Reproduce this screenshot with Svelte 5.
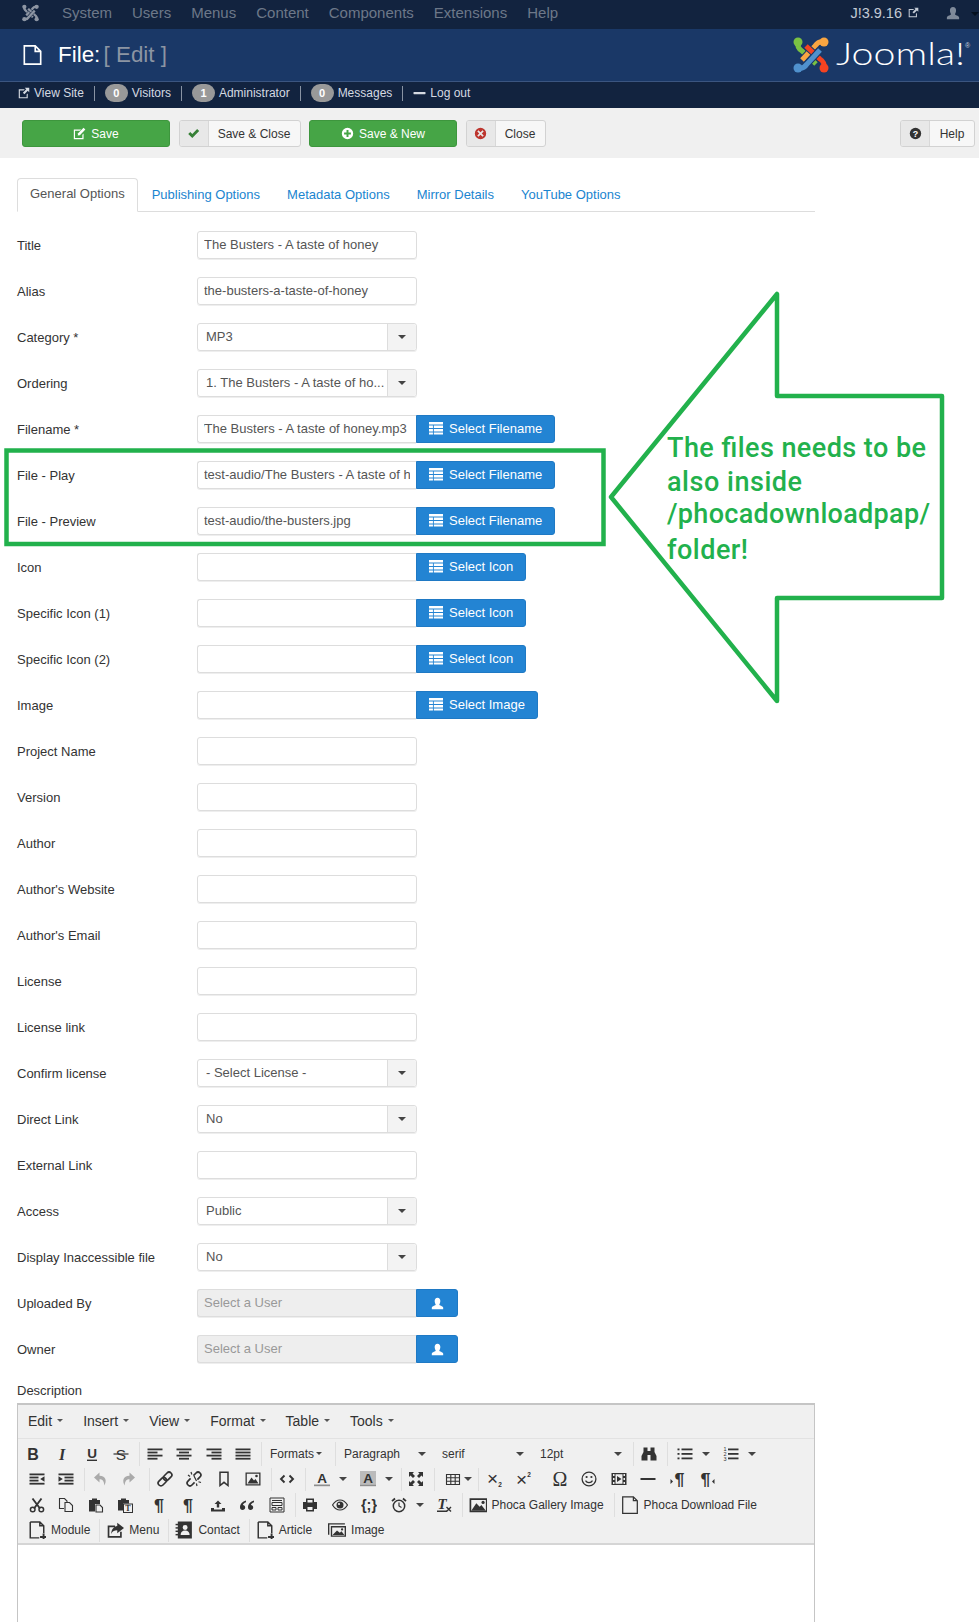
<script>
  const bars = (a) => a.map(([x, y, w, h = 1.8]) => `<rect x="${x}" y="${y}" width="${w}" height="${h}"/>`).join('');
  const txt = (s, size, x, y, o = '') =>
    `<text x="${x}" y="${y}" font-size="${size}" font-family="Liberation Sans" text-anchor="middle" ${o}>${s}</text>`;
  const line = (d, w = 1.4) => `<path d="${d}" fill="none" stroke="currentColor" stroke-width="${w}"/>`;
  const ys = [2.5, 5.6, 8.7, 11.8];

  const icons = {
    bold: txt('B', 16, 8, 14, 'font-weight="700"'),
    italic: `<text x="8" y="14" font-size="16" font-family="Liberation Serif" font-weight="700" font-style="italic" text-anchor="middle">I</text>`,
    underline: txt('U', 13.5, 8, 11.5, 'font-weight="700"') + bars([[3, 13.6, 10, 1.4]]),
    strike: txt('S', 15.5, 8, 13.5) + bars([[0.5, 7.4, 15, 1.2]]),
    alignleft: bars([[0.5, ys[0], 15], [0.5, ys[1], 10], [0.5, ys[2], 15], [0.5, ys[3], 10]]),
    aligncenter: bars([[0.5, ys[0], 15], [3, ys[1], 10], [0.5, ys[2], 15], [3, ys[3], 10]]),
    alignright: bars([[0.5, ys[0], 15], [5.5, ys[1], 10], [0.5, ys[2], 15], [5.5, ys[3], 10]]),
    justify: bars([[0.5, ys[0], 15], [0.5, ys[1], 15], [0.5, ys[2], 15], [0.5, ys[3], 15]]),
    outdent: bars([[0.5, ys[0], 15], [0.5, ys[1], 9], [0.5, ys[2], 9], [0.5, ys[3], 15]]) + '<path d="M15.5 5.2v5.6L11.2 8z"/>',
    indent: bars([[0.5, ys[0], 15], [6.5, ys[1], 9], [6.5, ys[2], 9], [0.5, ys[3], 15]]) + '<path d="M0.5 5.2v5.6L4.8 8z"/>',
    undo: '<path d="M7.5 1.5 2 6.5l5.5 5V8.3c2.8 0 4.6 1.4 4.8 6.2 2.6-4.6 1.8-9.4-4.8-9.8z"/>',
    redo: '<path d="M8.5 1.5l5.5 5-5.5 5V8.3c-2.8 0-4.6 1.4-4.8 6.2-2.6-4.6-1.8-9.4 4.8-9.8z"/>',
    link: '<g fill="none" stroke="currentColor" stroke-width="1.7" transform="rotate(-45 8 8)"><rect x="-0.5" y="5.2" width="9.5" height="5.6" rx="2.8"/><rect x="7" y="5.2" width="9.5" height="5.6" rx="2.8"/></g>',
    unlink: '<g fill="none" stroke="currentColor" stroke-width="1.7" transform="rotate(-45 8 8)"><path d="M6 5.2H2.300a2.800 2.800 0 0 0 0 5.600H6"/><path d="M10 5.200h3.700a2.800 2.800 0 0 1 0 5.600H10"/></g>' + line('M2 4 4 5.5M5 1l.8 2.500M11 15l-.6-2.500M15 11.500l-2.500-.8M8 5l2.500 5', 1.2),
    bookmark: line('M4 1.200h8v13.300l-4-3.200-4 3.200z', 1.5),
    image: '<path fill-rule="evenodd" d="M0.500 1.500h15v13h-15zM1.800 2.800v10.400h12.400V2.800z"/><path d="M2.500 12.500 6.500 6.500l2.500 3 1.500-1.500 3 4.500z"/><circle cx="11.500" cy="5" r="1.300"/>',
    code: line('M5.500 4.500 2 8l3.500 3.500M10.500 4.500 14 8l-3.500 3.500', 1.9),
    forecolor: txt('A', 13.5, 8, 11.5, 'font-weight="700"') + '<rect x="0" y="13.500" width="16" height="1.700" fill="#8e8e8e"/>',
    backcolor: '<rect x="0" y="-1" width="16" height="14.500" fill="#bbb"/>' + txt('A', 13.5, 8, 11.5, 'font-weight="700"') + '<rect x="0" y="13.500" width="16" height="1.700" fill="#8e8e8e"/>',
    fullscreen: '<path d="M1 1h5L4.500 2.500 7 5 5 7 2.500 4.500 1 6zM15 1v5l-1.500-1.500L11 7 9 5l2.500-2.500L10 1zM15 15h-5l1.500-1.500L9 11l2-2 2.500 2.500L15 10zM1 15v-5l1.500 1.500L5 9l2 2-2.500 2.500L6 15z"/>',
    table: line('M1.500 3.500h13v10h-13zM1.500 6.800h13M1.500 10.200h13M5.800 3.500v10M10.200 3.500v10', 1.1),
    sub: txt('×', 19, 6.5, 13.5) + txt('2', 6.5, 14, 15.5, 'font-weight="700"'),
    sup: txt('×', 19, 6.5, 14.5) + txt('2', 6.5, 14, 5.5, 'font-weight="700"'),
    omega: `<text x="8" y="15" font-size="20" font-family="Liberation Serif" text-anchor="middle">Ω</text>`,
    smile: '<circle cx="8" cy="8" r="6.900" fill="none" stroke="currentColor" stroke-width="1.300"/><circle cx="5.600" cy="6" r="1.100"/><circle cx="10.400" cy="6" r="1.100"/>' + line('M4.500 9.600c1.500 2.700 5.500 2.700 7 0', 1.2),
    media: '<path fill-rule="evenodd" d="M0.500 2h15v12h-15zM2 3v2h1.500V3zM2 7v2h1.500V7zM2 11v2h1.500v-2zM12.500 3v2H14V3zM12.500 7v2H14V7zM12.500 11v2H14v-2zM4.500 3.200v9.600h7V3.200z"/><path d="M6 5l4.500 3L6 11z"/>',
    hr: '<rect x="0.500" y="7" width="15" height="2"/>',
    ltr: txt('¶', 18, 9.500, 14.500, 'font-weight="700"') + '<path d="M0.500 8v5l2.500-2.500z"/>',
    rtl: txt('¶', 18, 6.500, 14.500, 'font-weight="700"') + '<path d="M15.500 8v5L13 10.500z"/>',
    cut: line('M3.500 1.500 11 11.500M12.500 1.500 5 11.500', 1.9) + '<circle cx="3.700" cy="12.500" r="2.300" fill="none" stroke="currentColor" stroke-width="1.500"/><circle cx="12.300" cy="12.500" r="2.300" fill="none" stroke="currentColor" stroke-width="1.500"/>',
    copy: line('M6 11.500H1.500v-10h5l2.500 2.500v2M7 5.500h4.500l3 3v6H7z', 1.1),
    paste: '<path d="M1 3h3V1.500h5V3h3v4H7v7.500H1z"/><path d="M8 8h4l2.500 2.500v4.500H8z" fill="#f0f0f0" stroke="currentColor" stroke-width="1.100"/>',
    pastetext: '<path d="M1 3h3V1.500h5V3h3v3.500H6v7H1z"/><rect x="6.500" y="7" width="9" height="8.500" fill="#f0f0f0" stroke="currentColor" stroke-width="1"/>' + `<text x="11" y="14" font-size="8" font-weight="700" font-family="Liberation Serif" text-anchor="middle">T</text>`,
    para: txt('¶', 18, 8, 14.500, 'font-weight="700"'),
    upload: '<path d="M8 3.500 11.500 7H9.200v3.500H6.800V7H4.500zM1 11h3v1.500h8V11h3v3.500H1z"/>',
    quote: '<path d="M7 3.500C3.500 4.500 1 7 1 10.300c0 1.700 1 2.700 2.500 2.700s2.700-1 2.700-2.500-1-2.400-2.300-2.500C4 7 5.300 5.800 7 5.200zM15 3.500c-3.500 1-6 3.500-6 6.800 0 1.700 1 2.700 2.500 2.700s2.700-1 2.700-2.500-1-2.400-2.300-2.500c.1-1 1.400-2.200 3.100-2.800z"/>',
    template: line('M1 1h14v14H1zM3 3.500h10M3 5.500h10v3H3zM3 10.500h4v2.500H3zM9 10.500h4v2.500H9z', 1),
    print: '<path fill-rule="evenodd" d="M4 1.500h8V5h3v7h-3v2.500H4V12H1V5h3zM5.500 3v2.500h5V3zM5.500 10v3h5v-3z"/>',
    eye: '<path fill="none" stroke="currentColor" stroke-width="1.200" d="M0.500 8C3 4 5.500 3 8 3s5 1 7.500 5C13 12 10.500 13 8 13s-5-1-7.500-5z"/><circle cx="8" cy="8" r="3.500"/><circle cx="7" cy="7" r="1.100" fill="#f0f0f0"/>',
    codesample: txt('{;}', 14.5, 8, 13, 'font-weight="700"'),
    clock: '<circle cx="8" cy="9" r="5.700" fill="none" stroke="currentColor" stroke-width="1.500"/>' + line('M8 5.500V9l2.500 1.500', 1.2) + line('M1 4.200 4 1.500M15 4.200 12 1.500', 1.8),
    clear: `<text x="6" y="12" font-size="15" font-weight="700" font-style="italic" font-family="Liberation Serif" text-anchor="middle">T</text>` + bars([[1, 13.5, 10, 1.5]]) + line('M10.500 10l4.500 4.500M15 10l-4.500 4.500', 1.4),
    binoc: '<path d="M2.500 1.500h4v3.500h3V1.500h4v4.500l2 4v4.500h-6V9h-3v5.500h-6V10l2-4z"/>',
    bullist: bars([[0.5, 2.5, 2, 1.800], [0.5, 7, 2, 1.800], [0.5, 11.500, 2, 1.800], [4.500, 2.500, 11, 1.800], [4.500, 7, 11, 1.800], [4.500, 11.500, 11, 1.800]]),
    numlist: bars([[5, 2.500, 10.500, 1.800], [5, 7, 10.500, 1.800], [5, 11.500, 10.500, 1.800]]) + txt('1', 5.500, 2, 5) + txt('2', 5.500, 2, 10) + txt('3', 5.500, 2, 15),
    newdoc: line('M2 .8h8.500l3.500 3.500v6.500M10 15H2V.8M10.500 .8v3.500H14', 1.300) + '<path d="M13 11h1.700v2.300H17V15h-2.300v2.300H13V15h-2.300v-1.700H13z"/>',
    menu: '<path d="M1.500 4H8v1.600H3v7.800h9.500V9.500h1.500v5.400H1.500z"/><path d="M10 1.500l6 4.700-6 4.700V8.300C7.500 8.300 5.800 9 4.700 11.500 4.700 7.500 7 5 10 4.500z"/>',
    contact: '<path fill-rule="evenodd" d="M2.500 .5H15v15H2.500zM9 3.500a2.200 2.200 0 1 0 0 4.400 2.200 2.200 0 0 0 0-4.400zM5 12.500h8c0-2.500-1.500-4-4-4s-4 1.500-4 4z"/><rect x="0.500" y="2.500" width="3" height="1.300"/><rect x="0.500" y="5.500" width="3" height="1.300"/><rect x="0.500" y="8.500" width="3" height="1.300"/><rect x="0.500" y="11.500" width="3" height="1.300"/>',
    image2: '<path fill-rule="evenodd" d="M0 2h15v1.200H1.200v9H0zM2.500 4.500H16V14H2.500zM3.700 5.700v7.100h11.100V5.700z"/><path d="M4 12.500l4-4 2.500 2 1.500-1.500 2.500 3.500z"/><circle cx="12.500" cy="7.500" r="1"/>',
    pgallery: '<path fill-rule="evenodd" d="M0.500 2h16v12.500H.5zM2 3.500V13h13V3.500z"/><path d="M2 13l4.500-6.500 3 3 1.500-1.500 4 5z"/><circle cx="12.500" cy="5.700" r="1.400"/>',
    pdoc: line('M1.500 .7H11l3.500 3.500v11.300h-13zM11 .7v3.500h3.500', 1.100)
  };

  const tool = {
    edit: '<path d="M1 3h9L8.500 4.500H2.500v9h9v-4l1.500-1.500v7H1z"/><path d="M13 1l2.200 2.200L8.500 10 5.800 10.500 6.300 7.700z"/>',
    check: '<path d="M1.500 8.500 4 6l2.500 2.500L12.500 2.500 15 5l-8.500 8.500z"/>',
    plus: '<path fill-rule="evenodd" d="M8 1a7 7 0 1 0 0 14A7 7 0 0 0 8 1zM6.800 3.800h2.400v3h3v2.400h-3v3H6.800v-3h-3V6.800h3z"/>',
    close: '<path fill-rule="evenodd" d="M8 1a7 7 0 1 0 0 14A7 7 0 0 0 8 1zM5.500 4l2.500 2.500L10.500 4 12 5.500 9.500 8l2.500 2.500-1.500 1.500L8 9.500 5.500 12 4 10.500 6.500 8 4 5.500z"/>',
    list: '<path d="M0 1h16v3H0zM0 5h4.500v3H0zM5.500 5h10.500v3H5.500zM0 9h4.500v3H0zM5.500 9h10.500v3H5.500zM0 13h4.500v2.500H0zM5.500 13h10.500v2.500H5.500z"/>',
    user: '<path d="M8 1c2.300 0 3.500 1.700 3.500 4S10.200 9 10.200 9.500c0 1 4.300 1.500 4.800 3.500v2H1v-2c.5-2 4.800-2.500 4.800-3.500C5.800 9 4.500 7.300 4.500 5S5.700 1 8 1z"/>',
    ext: '<path d="M1 3h8L7.500 4.500h-5v9h9V10L13 8.500V15H1z"/><path d="M9 1h6v6l-2-2-4.500 4.500-2-2L11 3z"/>',
    dash: '<rect x="0" y="6.500" width="16" height="3" rx=".6"/>'
  };

  // four hooks of the Joomla mark, in paint order
  const arms = [
    { d: 'M5 5C4 9 6 12 9 14L23 27', k: 0, ball: [5, 5] },
    { d: 'M31 5C27 4 24 6 22 9L9 23', k: 1, ball: [31, 5] },
    { d: 'M31 31C32 27 30 24 27 22L13 9', k: 2, ball: [31, 31] },
    { d: 'M5 31C9 32 12 30 14 27L27 13', k: 3, ball: [5, 31] }
  ];

  const fields = [
    { label: 'Title', kind: 'text', value: 'The Busters - A taste of honey' },
    { label: 'Alias', kind: 'text', value: 'the-busters-a-taste-of-honey' },
    { label: 'Category *', kind: 'select', value: 'MP3' },
    { label: 'Ordering', kind: 'select', value: '1. The Busters - A taste of ho...' },
    { label: 'Filename *', kind: 'pick', value: '/The Busters - A taste of honey.mp3', btn: 'Select Filename', shift: true },
    { label: 'File - Play', kind: 'pick', value: 'test-audio/The Busters - A taste of honey.mp3', btn: 'Select Filename' },
    { label: 'File - Preview', kind: 'pick', value: 'test-audio/the-busters.jpg', btn: 'Select Filename' },
    { label: 'Icon', kind: 'pick', value: '', btn: 'Select Icon' },
    { label: 'Specific Icon (1)', kind: 'pick', value: '', btn: 'Select Icon' },
    { label: 'Specific Icon (2)', kind: 'pick', value: '', btn: 'Select Icon' },
    { label: 'Image', kind: 'pick', value: '', btn: 'Select Image' },
    { label: 'Project Name', kind: 'text', value: '' },
    { label: 'Version', kind: 'text', value: '' },
    { label: 'Author', kind: 'text', value: '' },
    { label: "Author's Website", kind: 'text', value: '' },
    { label: "Author's Email", kind: 'text', value: '' },
    { label: 'License', kind: 'text', value: '' },
    { label: 'License link', kind: 'text', value: '' },
    { label: 'Confirm license', kind: 'select', value: '- Select License -' },
    { label: 'Direct Link', kind: 'select', value: 'No' },
    { label: 'External Link', kind: 'text', value: '' },
    { label: 'Access', kind: 'select', value: 'Public' },
    { label: 'Display Inaccessible file', kind: 'select', value: 'No' },
    { label: 'Uploaded By', kind: 'user', value: 'Select a User' },
    { label: 'Owner', kind: 'user', value: 'Select a User' }
  ];

  const navItems = ['System', 'Users', 'Menus', 'Content', 'Components', 'Extensions', 'Help'];
  const editorMenu = ['Edit', 'Insert', 'View', 'Format', 'Table', 'Tools'];

  // sep=false hides the divider line in front of a group
  const rows = [
    { cls: 'first', groups: [
      { items: [{ i: 'bold' }, { i: 'italic' }, { i: 'underline' }, { i: 'strike' }] },
      { items: [{ i: 'alignleft' }, { i: 'aligncenter' }, { i: 'alignright' }, { i: 'justify' }] },
      { items: [{ list: 'Formats', cls: 'fmt' }] },
      { items: [{ list: 'Paragraph' }, { list: 'serif' }, { list: '12pt' }] },
      { items: [{ i: 'binoc' }] },
      { items: [{ i: 'bullist', split: 'sp-list' }, { i: 'numlist', split: 'sp-list' }] }
    ] },
    { groups: [
      { items: [{ i: 'outdent' }, { i: 'indent' }] },
      { items: [{ i: 'undo', cls: 'dim' }, { i: 'redo', cls: 'dim' }] },
      { cls: 'push', items: [{ i: 'link' }, { i: 'unlink' }, { i: 'bookmark' }, { i: 'image' }] },
      { items: [{ i: 'code' }] },
      { items: [{ i: 'forecolor', split: 'sp-color' }, { i: 'backcolor', split: 'sp-color' }] },
      { items: [{ i: 'fullscreen' }] },
      { items: [{ i: 'table', split: 'sp-table' }] },
      { items: [{ i: 'sub' }, { i: 'sup' }] },
      { sep: false, cls: 'wide', items: [{ i: 'omega' }, { i: 'smile' }, { i: 'media' }, { i: 'hr' }, { i: 'ltr' }, { i: 'rtl' }] }
    ] },
    { groups: [
      { items: [{ i: 'cut' }, { i: 'copy' }, { i: 'paste' }, { i: 'pastetext' }] },
      { sep: false, items: [{ i: 'para' }, { i: 'para' }, { i: 'upload' }, { i: 'quote' }, { i: 'template' }] },
      { items: [{ i: 'print' }, { i: 'eye' }, { i: 'codesample' }, { i: 'clock', split: 'sp-clock' }, { i: 'clear' }] },
      { items: [{ i: 'pgallery', text: 'Phoca Gallery Image' }] },
      { items: [{ i: 'pdoc', text: 'Phoca Download File' }] }
    ] },
    { cls: 'last', groups: [
      { items: [{ i: 'newdoc', text: 'Module' }] },
      { items: [{ i: 'menu', text: 'Menu' }] },
      { items: [{ i: 'contact', text: 'Contact' }] },
      { items: [{ i: 'newdoc', text: 'Article' }] },
      { sep: false, items: [{ i: 'image2', text: 'Image' }] }
    ] }
  ];
</script>

{#snippet mark(colors, bg)}
  {#each arms as a}
    <path d={a.d} fill="none" stroke={bg} stroke-width="7"/>
    <path d={a.d} fill="none" stroke={colors[a.k]} stroke-width="5"/>
    <circle cx={a.ball[0]} cy={a.ball[1]} r="4.500" fill={colors[a.k]}/>
  {/each}
{/snippet}

{#snippet ic(name, cls = '')}
  <svg class="ic {cls}" viewBox="0 0 16 16" fill="currentColor">{@html icons[name] ?? tool[name]}</svg>
{/snippet}

{#snippet caret()}
  <span class="caret"></span>
{/snippet}

<div class="page">
  <nav class="topbar">
    <svg class="mini" viewBox="0 0 36 36">{@render mark(['#8d95a3', '#8d95a3', '#8d95a3', '#8d95a3'], '#12233f')}</svg>
    <ul class="nav">
      {#each navItems as item}<li>{item}</li>{/each}
    </ul>
    <span class="version">J!3.9.16 {@render ic('ext', 'ext')}</span>
    <span class="user">{@render ic('user')}</span>
    <span class="usercaret"></span>
  </nav>

  <header class="header">
    <svg class="doc" viewBox="0 0 20 22">
      <path d="M1 1h12l6 6v14H1zM13 1v6h6" fill="none" stroke="#fff" stroke-width="1.800"/>
    </svg>
    <h1>File: <span>[ Edit ]</span></h1>
    <svg class="logo" viewBox="0 0 180 36" aria-label="Joomla">
      {@render mark(['#7ac143', '#f9a541', '#f44321', '#5091cd'], '#1a3867')}
      <text x="43" y="28" font-family="Lato" font-weight="300" font-size="32" fill="#fff" textLength="129" lengthAdjust="spacingAndGlyphs">Joomla!</text>
      <text x="172" y="11" font-family="Liberation Sans" font-size="7" fill="#c8d0dc">®</text>
    </svg>
  </header>

  <div class="status">
    <span class="st">{@render ic('ext')} View Site</span>
    <span class="st"><b>0</b> Visitors</span>
    <span class="st"><b>1</b> Administrator</span>
    <span class="st"><b>0</b> Messages</span>
    <span class="st">{@render ic('dash', 'dash')} Log out</span>
  </div>

  <div class="toolbar">
    <button class="btn green w148">{@render ic('edit')} Save</button>
    <button class="btn plain w122"><span class="box check">{@render ic('check')}</span><span class="lbl">Save &amp; Close</span></button>
    <button class="btn green w148">{@render ic('plus')} Save &amp; New</button>
    <button class="btn plain w80"><span class="box red">{@render ic('close')}</span><span class="lbl">Close</span></button>
    <button class="btn plain w75 help"><span class="box"><svg class="ic" viewBox="0 0 16 16"><circle cx="8" cy="8" r="7" fill="#333"/><text x="8" y="12" font-size="11" font-weight="700" font-family="Liberation Sans" text-anchor="middle" fill="#fff">?</text></svg></span><span class="lbl">Help</span></button>
  </div>

  <main class="main">
    <ul class="tabs">
      <li class="active">General Options</li>
      <li>Publishing Options</li>
      <li>Metadata Options</li>
      <li>Mirror Details</li>
      <li>YouTube Options</li>
    </ul>

    <div class="form">
      {#each fields as f}
        <div class="row">
          <div class="label">{f.label}</div>
          {#if f.kind === 'text'}
            <div class="field"><span class="val">{f.value}</span></div>
          {:else if f.kind === 'select'}
            <div class="field sel">
              <span class="val">{f.value}</span>
              <span class="arrow">{@render caret()}</span>
            </div>
          {:else if f.kind === 'pick'}
            <div class="field flat"><span class="val" class:shift={f.shift}>{f.value}</span></div>
            <button class="pick">{@render ic('list')} {f.btn}</button>
          {:else}
            <div class="field flat off"><span class="val">{f.value}</span></div>
            <button class="pick userbtn">{@render ic('user')}</button>
          {/if}
        </div>
      {/each}
    </div>

    <div class="desc">Description</div>

    <div class="editor">
      <div class="menubar">
        {#each editorMenu as m}<span class="mi">{m}{@render caret()}</span>{/each}
      </div>
      <div class="bars">
        {#each rows as r}
          <div class="tbrow {r.cls ?? ''}">
            {#each r.groups as g, idx}
              <div class="grp {g.cls ?? ''}" class:nosep={g.sep === false || idx === 0}>
                {#each g.items as it}
                  {#if it.list}
                    <span class="listbox {it.cls ?? ''}">{it.list}{@render caret()}</span>
                  {:else if it.text}
                    <span class="tb">{@render ic(it.i, 'big')}{it.text}</span>
                  {:else if it.split}
                    <span class="ib split {it.split}">{@render ic(it.i)}{@render caret()}</span>
                  {:else}
                    <span class="ib {it.cls ?? ''}">{@render ic(it.i)}</span>
                  {/if}
                {/each}
              </div>
            {/each}
          </div>
        {/each}
      </div>
      <div class="area"></div>
    </div>
  </main>

  <svg class="note" viewBox="0 0 979 1622">
    <rect x="8" y="546.500" width="180" height="15.500" fill="#fff"/>
    <rect x="6.500" y="450.500" width="597" height="93.500" fill="none" stroke="#22b14c" stroke-width="4.500"/>
    <path d="M611 497 777 294V396H942V598H777V701Z" fill="none" stroke="#22b14c" stroke-width="4.500" stroke-linejoin="round"/>
    <g fill="#22b14c" font-family="Roboto" font-weight="500" font-size="27">
      <text x="667" y="457" textLength="259">The files needs to be</text>
      <text x="667" y="491" textLength="135">also inside</text>
      <text x="667" y="523" textLength="263">/phocadownloadpap/</text>
      <text x="667" y="559" textLength="81">folder!</text>
    </g>
  </svg>
</div>

<style>
  :global(body) {
    margin: 0;
    background: #fff;
    font-family: "Liberation Sans", Arial, sans-serif;
  }
  .page {
    position: relative;
    width: 979px;
    height: 1622px;
    overflow: hidden;
    font-size: 13px;
    color: #333;
  }
  .ic {
    width: 14px;
    height: 14px;
    flex: none;
  }
  ul {
    list-style: none;
    margin: 0;
    padding: 0;
  }

  .topbar {
    display: flex;
    align-items: center;
    box-sizing: border-box;
    height: 29px;
    padding-bottom: 4px;
    background: #12233f;
    color: #6d7889;
    font-size: 15px;
  }
  .mini {
    width: 17px;
    height: 18px;
    margin-left: 22px;
  }
  .nav {
    display: flex;
    gap: 20px;
    margin-left: 23px;
  }
  .version {
    display: flex;
    align-items: center;
    gap: 6px;
    margin-left: auto;
    font-size: 14.500px;
    color: #c3cad5;
  }
  .ext {
    width: 11px;
    height: 11px;
  }
  .user {
    display: flex;
    margin-left: 27px;
    color: #7f8a9a;
  }
  .usercaret {
    margin: 2px 0 0 11px;
    border: 4px solid transparent;
    border-top-color: #05101f;
    border-bottom: 0;
  }

  .header {
    display: flex;
    align-items: center;
    height: 52px;
    background: #1a3867;
    border-bottom: 1px solid #3b5580;
  }
  .doc {
    width: 19px;
    height: 20px;
    margin-left: 23px;
  }
  h1 {
    margin: 0 0 0 16px;
    font-size: 22.400px;
    font-weight: 400;
    color: #fff;
  }
  h1 span {
    margin-left: -3px;
    color: #8c95a3;
  }
  .logo {
    width: 180px;
    height: 36px;
    margin-left: auto;
    margin-right: 6px;
    overflow: visible;
  }

  .status {
    display: flex;
    align-items: center;
    box-sizing: border-box;
    height: 26px;
    padding: 0 0 4px 18px;
    background: #12233f;
    color: #d5dae2;
    font-size: 12px;
  }
  .st {
    display: flex;
    align-items: center;
    gap: 4px;
    padding-right: 10px;
    margin-right: 10px;
    border-right: 1px solid #8993a3;
    height: 15px;
  }
  .st:last-child {
    border: 0;
  }
  .st .ic {
    width: 12px;
    height: 12px;
  }
  .st .dash {
    width: 13px;
  }
  .st b {
    display: block;
    width: 23px;
    height: 18px;
    border-radius: 9px;
    background: #999;
    color: #fff;
    font-size: 11px;
    line-height: 18px;
    text-align: center;
  }

  .toolbar {
    display: flex;
    align-items: center;
    box-sizing: border-box;
    gap: 8.500px;
    height: 50px;
    padding: 1px 4px 0 22px;
    background: #f0f0f0;
  }
  .btn {
    display: flex;
    align-items: center;
    justify-content: center;
    flex: none;
    height: 27px;
    padding: 0;
    border-radius: 3px;
    font: 12px "Liberation Sans", Arial, sans-serif;
  }
  .green {
    gap: 5px;
    background: #46a546;
    border: 1px solid #3d963d;
    color: #fff;
  }
  .green .ic {
    width: 13px;
    height: 13px;
  }
  .w148 {
    width: 148px;
  }
  .w122 {
    width: 122px;
  }
  .w80 {
    width: 80px;
  }
  .w75 {
    width: 75px;
  }
  .plain {
    justify-content: flex-start;
    background: #f7f7f7;
    border: 1px solid #d2d2d2;
    color: #333;
    overflow: hidden;
  }
  .box {
    display: flex;
    align-items: center;
    justify-content: center;
    flex: none;
    width: 28px;
    height: 100%;
    background: #e8e8e8;
    border-right: 1px solid #d8d8d8;
  }
  .box .ic {
    width: 13px;
    height: 13px;
  }
  .check {
    color: #378137;
  }
  .red {
    color: #bd362f;
  }
  .lbl {
    flex: 1;
    text-align: center;
  }
  .help {
    margin-left: auto;
  }

  .main {
    padding: 20px 0 0 17px;
  }
  .tabs {
    display: flex;
    width: 798px;
    height: 34px;
    box-sizing: border-box;
    border-bottom: 1px solid #ddd;
    color: #1a85d0;
  }
  .tabs li {
    padding: 0 14px;
    line-height: 33px;
    margin-right: -1px;
  }
  .tabs .active {
    height: 34px;
    box-sizing: border-box;
    padding: 0 12px;
    margin-right: 0;
    line-height: 30px;
    border: 1px solid #ddd;
    border-bottom-color: #fff;
    border-radius: 4px 4px 0 0;
    color: #555;
  }

  .form {
    margin-top: 19px;
  }
  .row {
    display: flex;
    align-items: center;
    height: 28px;
    margin-bottom: 18px;
  }
  .label {
    width: 180px;
    padding-top: 1px;
  }
  .field {
    display: flex;
    align-items: center;
    box-sizing: border-box;
    width: 220px;
    height: 28px;
    padding: 0 6px;
    border: 1px solid #ddd;
    border-radius: 3px;
    color: #555;
    box-shadow: 0 1px 0 #eee;
  }
  .flat {
    width: 219px;
    border-radius: 3px 0 0 3px;
    border-right: 0;
  }
  .off {
    background: #eee;
    color: #999;
  }
  .val {
    flex: 1;
    min-width: 0;
    padding-bottom: 2px;
    overflow: hidden;
    white-space: nowrap;
  }
  .shift {
    text-indent: -3px;
  }
  .sel {
    padding: 0 0 0 8px;
  }
  .arrow {
    display: flex;
    align-items: center;
    justify-content: center;
    flex: none;
    width: 28px;
    height: 100%;
    background: #f3f3f3;
    border-left: 1px solid #ddd;
    border-radius: 0 3px 3px 0;
  }
  .pick {
    display: flex;
    align-items: center;
    gap: 6px;
    height: 28px;
    padding: 0 12px 2px 12px;
    background: #2384d3;
    border: 1px solid #1f79c4;
    border-radius: 0 3px 3px 0;
    color: #fff;
    font: 13px "Liberation Sans", Arial, sans-serif;
  }
  .userbtn {
    justify-content: center;
    width: 42px;
    padding: 0;
  }
  .userbtn .ic {
    width: 13px;
    height: 13px;
  }

  .caret {
    display: inline-block;
    flex: none;
    width: 0;
    height: 0;
    border-top: 4px solid #444;
    border-left: 4px solid transparent;
    border-right: 4px solid transparent;
  }

  .desc {
    height: 20px;
    line-height: 20px;
    margin-top: 1px;
  }
  .editor {
    box-sizing: border-box;
    width: 798px;
    height: 400px;
    margin-top: 2px;
    border: 1px solid #c5c5c5;
    border-width: 2px 1.500px 1px;
  }
  .menubar {
    display: flex;
    align-items: center;
    box-sizing: border-box;
    height: 34px;
    padding: 0 0 2px 10px;
    background: #f0f0f0;
    border-bottom: 1px solid #e2e2e2;
    font-size: 14px;
  }
  .mi {
    display: flex;
    align-items: center;
    gap: 5px;
    margin-right: 20px;
  }
  .mi .caret {
    border-width: 3.500px 3.500px 0;
    border-top-color: #555;
  }
  .bars {
    height: 106px;
    padding-top: 2px;
    box-sizing: border-box;
    background: #f0f0f0;
    border-bottom: 2px solid #d5d5d5;
  }
  .tbrow {
    display: flex;
    align-items: stretch;
    height: 25.500px;
    padding-left: 4px;
    font-size: 12px;
  }
  .tbrow.first {
    padding-left: 0;
  }
  .grp {
    display: flex;
    align-items: center;
    margin: 1px 0 1px 3px;
    border-left: 1px solid #dedede;
  }
  .grp.nosep {
    border-left-color: transparent;
  }
  .tbrow .grp:first-child {
    margin-left: 0;
    border-left: 0;
  }
  .grp.wide {
    margin-left: 6px;
  }
  .grp.push {
    margin-left: 5px;
  }
  .ib {
    display: flex;
    align-items: center;
    justify-content: center;
    flex: none;
    width: 29.500px;
    color: #333;
  }
  .ib .ic {
    width: 16px;
    height: 16px;
  }
  .dim {
    color: #aaa;
  }
  .split {
    justify-content: flex-start;
    padding-left: 9.500px;
    box-sizing: border-box;
  }
  .split .caret {
    margin-left: 9px;
    border-top-color: #444;
  }
  .sp-list {
    width: 46px;
  }
  .sp-color {
    width: 46px;
    padding-left: 8px;
  }
  .sp-table {
    width: 40px;
  }
  .sp-table .caret {
    margin-left: 3px;
  }
  .sp-clock {
    width: 45px;
    padding-left: 7px;
  }
  .listbox {
    display: flex;
    align-items: center;
    justify-content: space-between;
    box-sizing: border-box;
    width: 98px;
    padding: 0 8px;
    color: #333;
  }
  .listbox .caret {
    border-width: 4px 4px 0;
  }
  .fmt {
    width: 70px;
  }
  .fmt .caret {
    border-width: 3.500px 3.500px 0;
    margin-right: 2px;
  }
  .tb {
    display: flex;
    align-items: center;
    gap: 5px;
    padding: 0 7px 0 6px;
  }
  .last .tb {
    padding-right: 6px;
  }
  .tb .big {
    width: 18px;
    height: 18px;
  }

  .note {
    position: absolute;
    inset: 0;
    width: 979px;
    height: 1622px;
    pointer-events: none;
  }
</style>
